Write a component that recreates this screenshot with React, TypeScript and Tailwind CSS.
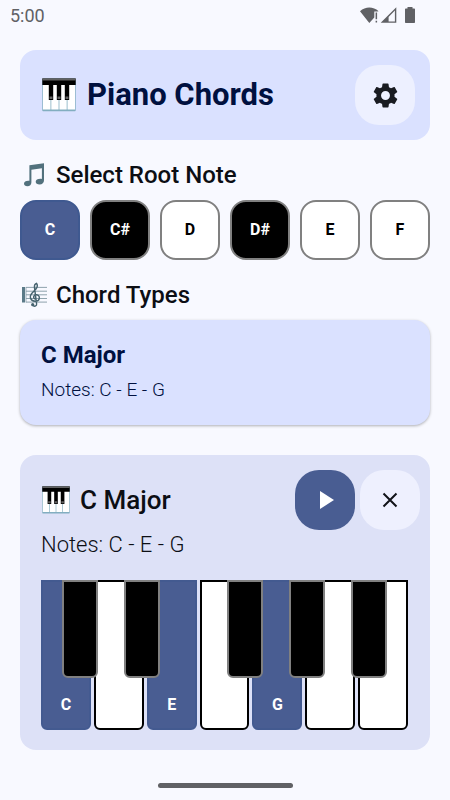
import React from "react";

type Note = { name: string; sharp?: boolean };

const ROOTS: Note[] = [
  { name: "C" },
  { name: "C#", sharp: true },
  { name: "D" },
  { name: "D#", sharp: true },
  { name: "E" },
  { name: "F" },
];

const WHITE_KEYS = ["C", "D", "E", "F", "G", "A", "B"];
const CHORD = ["C", "E", "G"];

const KEYBOARD_UNITS = 367;
const BLACK_KEY_UNITS = 36;
const BLACK_KEYS = [
  { name: "C#", at: 21 },
  { name: "D#", at: 83 },
  { name: "F#", at: 186 },
  { name: "G#", at: 248 },
  { name: "A#", at: 310 },
];

function PianoIcon({ className }: { className: string }) {
  return (
    <svg viewBox="0 0 34 34" className={className} aria-hidden="true">
      <rect x="0.3" y="0.5" width="33.4" height="32.8" rx="0.8" fill="#82aec0" />
      <path d="M1 6h7.5v25.6H1zM9.3 6h7.3v25.6H9.3zM17.4 6h7.3v25.6h-7.3zM25.5 6H33v25.6h-7.5z" fill="#fff" />
      <path d="M0.3 0.5h33.4v6.5H0.3z" fill="#000" />
      <path d="M0.3 0.5h33.4v1.9H0.3z" fill="#616161" />
      <path d="M6.8 5h4.4v17H6.8zM14.8 5h4.4v17h-4.4zM22.8 5h4.4v17h-4.4z" fill="#000" />
      <path d="M7.5 18.5h3v2.4h-3zM15.5 18.5h3v2.4h-3zM23.5 18.5h3v2.4h-3z" fill="#616161" />
    </svg>
  );
}

function NotesIcon() {
  return (
    <svg viewBox="0 0 26 26" className="size-[26px]" aria-hidden="true">
      <path
        d="M8.400 3.200 23 1.300V18.300c0 2.500-1.700 4.200-4.400 4.200-2.300 0-3.900-1-3.900-2.700 0-2 2.500-3.400 6.200-2.900V6.300L10.400 7.800v12.400c0 2.400-1.600 4.100-4 4.100-2 0-3.400-1-3.400-2.700 0-2 2.200-3.300 5.400-2.900z"
        fill="#52717d"
      />
    </svg>
  );
}

function ScoreIcon() {
  return (
    <svg viewBox="0 0 26 26" className="size-[26px]" aria-hidden="true">
      <path d="M1 5h3v15.500H1z" fill="#5b7a88" />
      <path d="M4.600 5h.8v15.500h-.8z" fill="#8aa1ab" />
      <path d="M5 5.400h21M5 9.200h21M5 12.800h21M5 16.500h21M5 20.100h21" stroke="#8299a4" strokeWidth="0.9" />
      <path
        d="M12.200 23.700c1.600 1.100 3.700.3 3.400-1.900L13.500 5.700c-.3-2.100.7-4 1.900-4.400 1.200 1.500 1 4-.6 5.900l-3.700 3.800c-3.100 3.300-2 7.900 3 8.200 5.400.1 5.400-6.300 1.500-6.500-3.300-.1-3.900 3.500-1.400 4.400"
        fill="none"
        stroke="#45626e"
        strokeWidth="1.4"
        strokeLinecap="round"
        strokeLinejoin="round"
      />
      <circle cx="11.700" cy="22.700" r="1.600" fill="#45626e" />
    </svg>
  );
}

function GearIcon() {
  return (
    <svg viewBox="0 0 24 24" className="size-[29px] fill-[#191b21]" aria-hidden="true">
      <path d="M19.43 12.98c.04-.32.07-.64.07-.98s-.03-.66-.07-.98l2.11-1.65c.19-.15.24-.42.12-.64l-2-3.46c-.12-.22-.39-.3-.61-.22l-2.49 1c-.52-.4-1.08-.73-1.69-.98l-.38-2.65C14.46 2.18 14.25 2 14 2h-4c-.25 0-.46.18-.49.42l-.38 2.65c-.61.25-1.17.59-1.69.98l-2.49-1c-.23-.09-.49 0-.61.22l-2 3.46c-.13.22-.07.49.12.64l2.11 1.65c-.04.32-.07.65-.07.98s.03.66.07.98l-2.11 1.65c-.19.15-.24.42-.12.64l2 3.46c.12.22.39.3.61.22l2.49-1c.52.4 1.08.73 1.69.98l.38 2.65c.03.24.24.42.49.42h4c.25 0 .46-.18.49-.42l.38-2.65c.61-.25 1.17-.59 1.69-.98l2.49 1c.23.09.49 0 .61-.22l2-3.46c.12-.22.07-.49-.12-.64l-2.11-1.65zM12 15.700a3.700 3.700 0 1 1 0-7.400 3.700 3.700 0 0 1 0 7.400z" />
    </svg>
  );
}

function StatusBar() {
  return (
    <div className="flex h-[30px] items-center justify-between pr-[34px] pl-[10px] text-[#606165]">
      <span className="pt-0.5 text-lg leading-6">5:00</span>
      <svg viewBox="0 0 56 18" className="h-[18px] w-14" fill="currentColor" aria-hidden="true">
        <path d="M0 5.2C5.4.2 13.2.2 18.6 5.2L17.5 5.600H14.300V11.600L9.300 17z" />
        <path d="M15.600 6.600h1.500v6.600h-1.500zM15.600 14.800h1.500v1.700h-1.500z" />
        <path fillRule="evenodd" d="M36.300 1.200v15.600H20.700zM34.900 4.600 28.600 11v4.400h6.300z" />
        <path d="M47.500 1h5v1.400h1.500c.6 0 1 .4 1 1V16c0 .6-.4 1-1 1h-8c-.6 0-1-.4-1-1V3.400c0-.6.4-1 1-1h1.500z" />
      </svg>
    </div>
  );
}

function RootButton({ note, selected }: { note: Note; selected: boolean }) {
  const tone = selected
    ? "border-[#3f5990] bg-[#495d92] text-white"
    : note.sharp
      ? "border-[#808080] bg-black text-white"
      : "border-[#808080] bg-white text-black";
  return (
    <button
      type="button"
      aria-pressed={selected}
      className={`h-[60px] flex-1 rounded-2xl border-2 text-base leading-6 font-bold ${tone}`}
    >
      {note.name}
    </button>
  );
}

function Keyboard() {
  return (
    <div className="relative mt-5 flex h-[150px] gap-[3px]">
      {WHITE_KEYS.map((key) => {
        const active = CHORD.includes(key);
        return (
          <button
            key={key}
            type="button"
            aria-label={key}
            className={`flex flex-1 items-end justify-center rounded-b-md border-2 pb-[11px] text-base leading-6 font-bold text-white ${
              active ? "border-[#435a90] bg-[#495d92]" : "border-black bg-white"
            }`}
          >
            {active ? key : null}
          </button>
        );
      })}
      {BLACK_KEYS.map((key) => (
        <button
          key={key.name}
          type="button"
          aria-label={key.name}
          className="absolute top-0 h-[98px] rounded-b-md border-2 border-[#808080] bg-black"
          style={{
            left: `${(key.at / KEYBOARD_UNITS) * 100}%`,
            width: `${(BLACK_KEY_UNITS / KEYBOARD_UNITS) * 100}%`,
          }}
        />
      ))}
    </div>
  );
}

export default function App() {
  return (
    <div className="flex min-h-screen flex-col bg-[#f8f9ff] font-[Roboto,sans-serif] text-[#0c0e14]">
      <StatusBar />
      <main className="flex flex-col px-5 pt-5">
        <header className="flex h-[90px] items-center justify-between rounded-2xl bg-[#dae1ff] pr-[15px] pl-[22px]">
          <h1 className="flex items-center gap-[11px] text-[31px] leading-[38px] font-bold text-[#00103f]">
            <PianoIcon className="size-[34px]" />
            Piano Chords
          </h1>
          <button
            type="button"
            aria-label="Settings"
            className="flex size-[60px] items-center justify-center rounded-3xl bg-[#edf0ff]"
          >
            <GearIcon />
          </button>
        </header>

        <h2 className="mt-5 flex h-[30px] items-center gap-[9px] pl-px text-2xl leading-[30px] font-medium">
          <NotesIcon />
          Select Root Note
        </h2>
        <div className="mt-[10px] flex gap-[10px]">
          {ROOTS.map((note) => (
            <RootButton key={note.name} note={note} selected={note.name === "C"} />
          ))}
        </div>

        <h2 className="mt-5 flex h-[30px] items-center gap-[9px] pl-px text-2xl leading-[30px] font-medium">
          <ScoreIcon />
          Chord Types
        </h2>
        <button
          type="button"
          className="mt-[10px] flex h-[105px] flex-col rounded-2xl bg-[#dae1ff] px-[21px] pt-5 text-left text-[#00103f] shadow-[0_1px_3px_rgba(0,0,0,0.3)]"
        >
          <span className="text-2xl leading-[30px] font-bold">C Major</span>
          <span className="mt-2 text-[19px] leading-6 font-light">Notes: C - E - G</span>
        </button>

        <section className="mt-[30px] rounded-2xl bg-[#dde1f7] pt-[15px] pb-5">
          <div className="flex items-center gap-[5px] pr-[10px] pl-[22px]">
            <h2 className="flex flex-1 items-center gap-[10px] text-[26px] leading-[30px] font-medium">
              <PianoIcon className="size-[28px]" />
              C Major
            </h2>
            <button
              type="button"
              aria-label="Play"
              className="flex size-[60px] items-center justify-center rounded-3xl bg-[#495d92]"
            >
              <svg viewBox="0 0 30 30" className="size-[30px]" aria-hidden="true">
                <path d="M10 6v18l14-9z" fill="#fff" />
              </svg>
            </button>
            <button
              type="button"
              aria-label="Close"
              className="flex size-[60px] items-center justify-center rounded-3xl bg-[#eef0fe]"
            >
              <svg viewBox="0 0 30 30" className="size-[30px]" aria-hidden="true">
                <path d="m8.500 8.500 13 13m0-13-13 13" stroke="#111318" strokeWidth="2" />
              </svg>
            </button>
          </div>
          <div className="pr-[22px] pl-[21px]">
            <p className="text-[22px] leading-[30px] font-light">Notes: C - E - G</p>
            <Keyboard />
          </div>
        </section>
      </main>
      <div className="mx-auto mt-auto mb-3 h-[5px] w-[30%] rounded-full bg-[#606165]" />
    </div>
  );
}
